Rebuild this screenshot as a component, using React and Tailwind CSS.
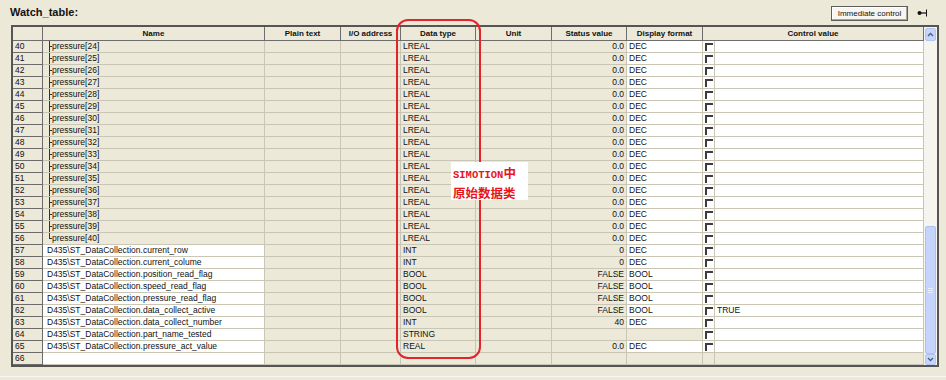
import React from "react";

const rows = [];
for (let i = 0; i <= 16; i++) {
  rows.push({
    n: 40 + i,
    name: `pressure[${24 + i}]`,
    tree: i === 16 ? "last" : "mid",
    type: "LREAL",
    status: "0.0",
    fmt: "DEC",
  });
}
const base = "D435\\ST_DataCollection.";
[
  ["current_row", "INT", "0", "DEC"],
  ["current_colume", "INT", "0", "DEC"],
  ["position_read_flag", "BOOL", "FALSE", "BOOL"],
  ["speed_read_flag", "BOOL", "FALSE", "BOOL"],
  ["pressure_read_flag", "BOOL", "FALSE", "BOOL"],
  ["data_collect_active", "BOOL", "FALSE", "BOOL", "TRUE"],
  ["data_collect_number", "INT", "40", "DEC"],
  ["part_name_tested", "STRING", "", ""],
  ["pressure_act_value", "REAL", "0.0", "DEC"],
].forEach(([name, type, status, fmt, ctrl], i) => {
  rows.push({ n: 57 + i, name: base + name, type, status, fmt, ctrl });
});
rows.push({ n: 66, name: "", type: "", status: "", fmt: "", empty: true });

const cell = "h-full shrink-0 border-r border-b border-[#c9c6b6] overflow-hidden whitespace-nowrap leading-[11px]";

function Row({ r }) {
  return (
    <div className="flex h-[12px]">
      <div className="w-[30px] h-full shrink-0 border-r border-b border-[#6b6b6b] bg-[#ece9d8] pl-[2px] leading-[11px]">
        {r.n}
      </div>
      <div className={`${cell} w-[222px] relative ${r.tree ? "bg-[#ece9d8] pl-[9px]" : "bg-white pl-[4px]"}`}>
        {r.tree && (
          <>
            <span
              className={`absolute left-[6px] top-0 w-px bg-[#333] ${r.tree === "last" ? "h-[6px]" : "bottom-[-1px]"}`}
            />
            <span className="absolute left-[6px] top-[5px] w-[3px] h-px bg-[#333]" />
          </>
        )}
        {r.name}
      </div>
      <div className={`${cell} w-[76px] bg-[#ece9d8]`} />
      <div className={`${cell} w-[60px] bg-[#ece9d8]`} />
      <div className={`${cell} w-[75px] bg-[#ece9d8] pl-[2px]`}>{r.type}</div>
      <div className={`${cell} w-[76px] bg-[#ece9d8]`} />
      <div className={`${cell} w-[75px] bg-[#ece9d8] pr-[2px] text-right`}>{r.status}</div>
      <div className={`${cell} w-[76px] pl-[2px] ${r.fmt ? "bg-white" : "bg-[#ece9d8]"}`}>{r.fmt}</div>
      <div className={`${cell} w-[12px] ${r.empty ? "bg-[#ece9d8]" : "bg-white"}`}>
        {!r.empty && (
          <div className="ml-[2px] mt-[2px] w-[8px] h-[8px] border-t-2 border-l-2 border-[#3c3c3c]" />
        )}
      </div>
      <div className={`${cell} w-[209px] pl-[2px] ${r.empty ? "bg-[#ece9d8]" : "bg-white"}`}>{r.ctrl}</div>
    </div>
  );
}

const head = "h-full shrink-0 border-r border-b border-[#6e6e6e] bg-[#ece9d8] font-bold text-[8px] leading-[13px] text-center";

export default function App() {
  return (
    <div
      className="relative w-[946px] h-[380px] overflow-hidden bg-[#ece9d8] text-[#111] text-[8.5px]"
      style={{ fontFamily: '"Liberation Sans", Arial, sans-serif' }}
    >
      <div className="flex h-[25px]">
        <div className="pl-[10px] pt-[6px] text-[11px] leading-[13px] font-bold">Watch_table:</div>
        <div className="ml-auto mt-[6px] w-[77px] h-[15px] border border-[#5d5d5d] bg-[#f6f5f0] shadow-[inset_-1px_-1px_0_#a8a69a,inset_1px_1px_0_#fff] text-[8px] leading-[13px] text-center">
          Immediate control
        </div>
        <div className="w-[28px] flex justify-center pt-[9px]">
          <svg width="11" height="8" viewBox="0 0 11 8">
            <circle cx="2.5" cy="4" r="2" fill="#111" />
            <line x1="3" y1="4" x2="9" y2="4" stroke="#111" strokeWidth="1.2" />
            <line x1="9.5" y1="0.5" x2="9.5" y2="7.5" stroke="#111" strokeWidth="1" />
          </svg>
        </div>
        <div className="w-[10px]" />
      </div>

      <div className="ml-[11px] w-[928px] h-[342px] border-2 border-[#555] flex">
        <div className="w-[911px] flex flex-col">
          <div className="flex h-[14px]">
            <div className={`${head} w-[30px]`} />
            <div className={`${head} w-[222px]`}>Name</div>
            <div className={`${head} w-[76px]`}>Plain text</div>
            <div className={`${head} w-[60px]`}>I/O address</div>
            <div className={`${head} w-[75px]`}>Data type</div>
            <div className={`${head} w-[76px]`}>Unit</div>
            <div className={`${head} w-[75px]`}>Status value</div>
            <div className={`${head} w-[76px]`}>Display format</div>
            <div className={`${head} w-[221px]`}>Control value</div>
          </div>
          {rows.map((r) => (
            <Row key={r.n} r={r} />
          ))}
        </div>
        <div className="w-[13px] flex flex-col bg-[#f5f4ef]">
          <div className="h-[13px] mx-px mt-px bg-[#c6d5fb] border border-[#b3c5ef] rounded-[2px] flex items-center justify-center">
            <svg width="7" height="5" viewBox="0 0 7 5">
              <path d="M1 4 L3.5 1.5 L6 4" fill="none" stroke="#4b5f86" strokeWidth="1.4" />
            </svg>
          </div>
          <div className="h-[185px]" />
          <div className="h-[128px] mx-px bg-[#c4d4fc] border border-[#aec2ee] rounded-[2px] flex flex-col items-center justify-center gap-[1px]">
            <div className="w-[5px] h-px bg-[#e6edfe]" />
            <div className="w-[5px] h-px bg-[#e6edfe]" />
            <div className="w-[5px] h-px bg-[#e6edfe]" />
          </div>
          <div className="h-[11px] mx-px bg-[#c6d5fb] border border-[#b3c5ef] rounded-[2px] flex items-center justify-center">
            <svg width="7" height="5" viewBox="0 0 7 5">
              <path d="M1 1 L3.5 3.5 L6 1" fill="none" stroke="#4b5f86" strokeWidth="1.4" />
            </svg>
          </div>
        </div>
      </div>
      <div className="h-[10px] border-b border-[#f7f6f0]" />

      {/* annotation */}
      <div className="absolute left-[396px] top-[19px] w-[85px] h-[340px] border-2 border-[#e3242b] rounded-[12px]" />
      <div
        className="absolute left-[451px] top-[162px] w-[77px] h-[38px] bg-white pl-[2px] pt-[2px] text-[#e8141a] font-bold leading-[17px]"
        style={{ fontFamily: '"Noto Sans CJK SC", sans-serif' }}
      >
        <div className="text-[12.5px]">
          <span className="text-[10.5px]" style={{ fontFamily: '"Liberation Mono", monospace' }}>
            SIMOTION
          </span>
          中
        </div>
        <div className="text-[12.5px]">原始数据类</div>
      </div>
    </div>
  );
}
